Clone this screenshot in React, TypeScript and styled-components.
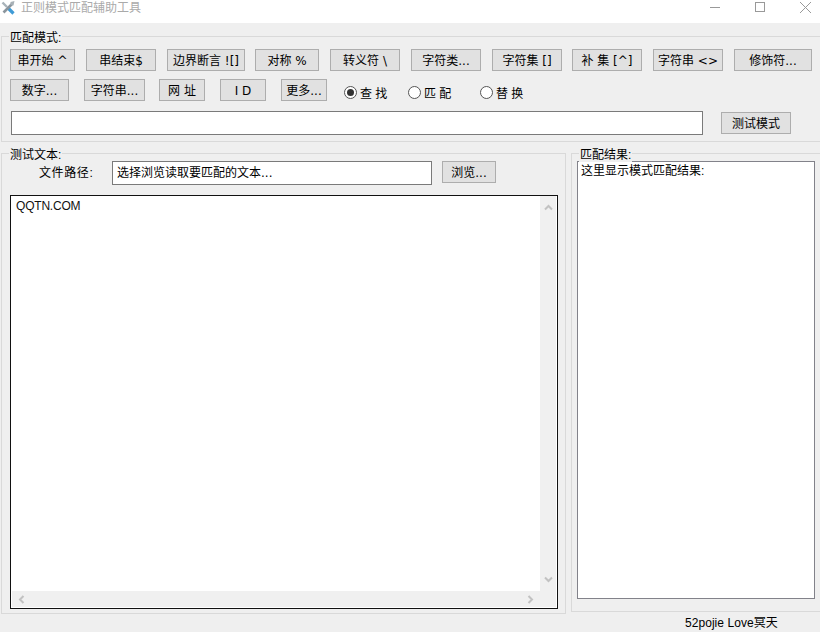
import styled, { createGlobalStyle } from "styled-components";

const GlobalStyle = createGlobalStyle`
  html, body {
    margin: 0;
    padding: 0;
    background: #efefef;
  }
  body {
    font-family: "Liberation Sans", "Noto Sans CJK SC", sans-serif;
    font-size: 12px;
    color: #000;
  }
`;

const Window = styled.div`
  width: 820px;
  height: 632px;
  display: flex;
  flex-direction: column;
  overflow: hidden;
  background: #efefef;
`;

const TitleBar = styled.div`
  height: 23px;
  flex: none;
  display: flex;
  align-items: flex-start;
  background: #fff;
`;

const AppIcon = styled.svg`
  width: 16px;
  height: 16px;
  flex: none;
`;

const Title = styled.span`
  margin: 1px 0 0 5px;
  line-height: 14px;
  color: #aaa;
`;

const WindowControls = styled.div`
  margin-left: auto;
  display: flex;
  padding: 1px 8px 0 0;
  gap: 32px;
`;

const ControlIcon = styled.svg`
  width: 13px;
  height: 13px;
  display: block;
`;

const GroupBox = styled.section<{ $w?: number; $h: number }>`
  position: relative;
  box-sizing: border-box;
  width: ${({ $w }) => ($w ? `${$w}px` : "auto")};
  height: ${({ $h }) => $h}px;
  border: 1px solid #d9d9d9;
  flex: none;
`;

const Legend = styled.div<{ $left: number }>`
  position: absolute;
  top: -6px;
  left: ${({ $left }) => $left}px;
  padding: 0 1px;
  line-height: 14px;
  background: #efefef;
  white-space: nowrap;
`;

const PatternGroup = styled(GroupBox)`
  margin: 13px -4px 0 1px;
  padding: 12px 0 0 8px;
`;

const ButtonRow = styled.div<{ $mt?: number }>`
  display: flex;
  align-items: flex-start;
  margin-top: ${({ $mt }) => $mt ?? 0}px;
`;

const Button = styled.button<{ $w: number; $mr?: number }>`
  box-sizing: border-box;
  width: ${({ $w }) => $w}px;
  height: 22px;
  margin: 0 ${({ $mr }) => $mr ?? 0}px 0 0;
  padding: 1px 0 0;
  flex: none;
  border: 1px solid #adadad;
  background: #e1e1e1;
  color: #000;
  font-family: "DejaVu Sans", "Noto Sans CJK SC", sans-serif;
  font-size: 12px;
  line-height: 18px;
  white-space: pre;
`;

const RadioGroup = styled.div`
  display: flex;
  align-items: center;
  height: 22px;
  margin-left: 17px;
`;

const RadioItem = styled.label<{ $w: number }>`
  display: flex;
  align-items: center;
  width: ${({ $w }) => $w}px;
  padding-top: 8px;
  box-sizing: border-box;
`;

const RadioDot = styled.span<{ $on?: boolean }>`
  box-sizing: border-box;
  width: 13px;
  height: 13px;
  margin: -3px 3px 0 0;
  flex: none;
  border: 1px solid #555;
  border-radius: 50%;
  background: #fff;
  display: flex;
  align-items: center;
  justify-content: center;
  &::after {
    content: "";
    width: 7px;
    height: 7px;
    border-radius: 50%;
    background: ${({ $on }) => ($on ? "#333" : "transparent")};
  }
`;

const RadioText = styled.span`
  white-space: pre;
  line-height: 14px;
`;

const PatternRow = styled.div`
  display: flex;
  align-items: flex-start;
  margin: 10px 0 0 1px;
`;

const TextField = styled.div<{ $w: number; $h: number }>`
  box-sizing: border-box;
  width: ${({ $w }) => $w}px;
  height: ${({ $h }) => $h}px;
  flex: none;
  border: 1px solid #7a7a7a;
  background: #fff;
  padding: 4px 0 0 4px;
  font-family: "DejaVu Sans", "Noto Sans CJK SC", sans-serif;
  line-height: 14px;
  white-space: pre;
`;

const TestButton = styled(Button)`
  margin: 1px 0 0 18px;
`;

const Panels = styled.div`
  display: flex;
  align-items: flex-start;
  margin: 11px 0 0 1px;
`;

const FileRow = styled.div`
  display: flex;
  align-items: flex-start;
  margin: 7px 0 0 0;
`;

const FileLabel = styled.span`
  width: 102px;
  flex: none;
  box-sizing: border-box;
  padding: 5px 0 0 29px;
  line-height: 14px;
  letter-spacing: 0.6px;
`;

const BrowseButton = styled(Button)`
  margin-left: 10px;
`;

const SourceGroup = styled(GroupBox)`
  margin-right: 5px;
  padding-left: 8px;
`;

const SourceBox = styled.div`
  box-sizing: border-box;
  width: 548px;
  height: 414px;
  margin-top: 10px;
  border: 1px solid #111;
  background: #fff;
  padding: 0 1px 1px 1px;
  display: grid;
  grid-template-columns: 1fr 16px;
  grid-template-rows: 1fr 16px;
`;

const SourceText = styled.div`
  padding: 3px 0 0 4px;
  line-height: 14px;
  letter-spacing: -0.2px;
  color: #111;
`;

const VerticalBar = styled.div`
  background: #f0f0f0;
  display: flex;
  flex-direction: column;
  justify-content: space-between;
  align-items: center;
  padding: 7px 0;
`;

const HorizontalBar = styled.div`
  background: #f0f0f0;
  display: flex;
  justify-content: space-between;
  align-items: center;
  padding: 0 5px;
`;

const BarCorner = styled.div`
  background: #f0f0f0;
`;

const Chevron = styled.svg`
  width: 9px;
  height: 9px;
  display: block;
`;

const ResultGroup = styled(GroupBox)`
  padding: 7px 0 0 5px;
`;

const ResultBox = styled.div`
  box-sizing: border-box;
  width: 238px;
  height: 438px;
  border: 1px solid #82828a;
  background: #fff;
  padding: 2px 0 0 3px;
  line-height: 14px;
`;

const StatusBar = styled.div`
  display: flex;
  padding: 1px 0 0 685px;
  line-height: 16px;
  letter-spacing: 0.05px;
`;

function ChevronIcon({ points }: { points: string }) {
  return (
    <Chevron viewBox="0 0 9 9">
      <polyline points={points} fill="none" stroke="#c2c2c2" strokeWidth="2" />
    </Chevron>
  );
}

export default function App() {
  return (
    <Window>
      <GlobalStyle />
      <TitleBar>
        <AppIcon viewBox="0 0 16 16">
          <path d="M2.5 2.5 L7 7" stroke="#a9b3ba" strokeWidth="2.4" />
          <path d="M8 8 L13.5 13.5" stroke="#3f9bd6" strokeWidth="3.2" />
          <path d="M12 4 L3.5 12.5" stroke="#8b959d" strokeWidth="2.6" />
          <path d="M14.5 1 L10.5 2 L10.5 5 L13.5 5.5 Z" fill="#a7b0b6" />
        </AppIcon>
        <Title>正则模式匹配辅助工具</Title>
        <WindowControls>
          <ControlIcon viewBox="0 0 13 13">
            <path d="M1 6.5H11" stroke="#999" />
          </ControlIcon>
          <ControlIcon viewBox="0 0 13 13">
            <rect x="1.5" y="1.5" width="9" height="9" fill="none" stroke="#999" />
          </ControlIcon>
          <ControlIcon viewBox="0 0 13 13">
            <path d="M1 1L12 12M12 1L1 12" stroke="#999" />
          </ControlIcon>
        </WindowControls>
      </TitleBar>

      <PatternGroup $h={106}>
        <Legend $left={7}>匹配模式:</Legend>
        <ButtonRow>
          <Button $w={65} $mr={11}>串开始 ^</Button>
          <Button $w={70} $mr={11}>串结束$</Button>
          <Button $w={78} $mr={10}>边界断言 ![]</Button>
          <Button $w={64} $mr={11}>对称 %</Button>
          <Button $w={70} $mr={11}>转义符 \</Button>
          <Button $w={70} $mr={11}>字符类...</Button>
          <Button $w={70} $mr={10}>字符集 []</Button>
          <Button $w={70} $mr={11}>补 集 [^]</Button>
          <Button $w={70} $mr={11}>字符串 &lt;&gt;</Button>
          <Button $w={78}>修饰符...</Button>
        </ButtonRow>
        <ButtonRow $mt={8}>
          <Button $w={59} $mr={15}>数字...</Button>
          <Button $w={61} $mr={14}>字符串...</Button>
          <Button $w={46} $mr={15}>网 址</Button>
          <Button $w={46} $mr={15}>I D</Button>
          <Button $w={46}>更多...</Button>
          <RadioGroup>
            <RadioItem $w={64}>
              <RadioDot $on />
              <RadioText>查 找</RadioText>
            </RadioItem>
            <RadioItem $w={72}>
              <RadioDot />
              <RadioText>匹 配</RadioText>
            </RadioItem>
            <RadioItem $w={64}>
              <RadioDot />
              <RadioText>替 换</RadioText>
            </RadioItem>
          </RadioGroup>
        </ButtonRow>
        <PatternRow>
          <TextField $w={692} $h={24} />
          <TestButton $w={70}>测试模式</TestButton>
        </PatternRow>
      </PatternGroup>

      <Panels>
        <SourceGroup $w={565} $h={461}>
          <Legend $left={7}>测试文本:</Legend>
          <FileRow>
            <FileLabel>文件路径:</FileLabel>
            <TextField $w={320} $h={24}>选择浏览读取要匹配的文本...</TextField>
            <BrowseButton $w={54}>浏览...</BrowseButton>
          </FileRow>
          <SourceBox>
            <SourceText>QQTN.COM</SourceText>
            <VerticalBar>
              <ChevronIcon points="1,6.5 4.5,3 8,6.5" />
              <ChevronIcon points="1,2.5 4.5,6 8,2.5" />
            </VerticalBar>
            <HorizontalBar>
              <ChevronIcon points="6.5,1 3,4.5 6.5,8" />
              <ChevronIcon points="2.5,1 6,4.5 2.5,8" />
            </HorizontalBar>
            <BarCorner />
          </SourceBox>
        </SourceGroup>
        <ResultGroup $w={252} $h={459}>
          <Legend $left={7}>匹配结果:</Legend>
          <ResultBox>这里显示模式匹配结果:</ResultBox>
        </ResultGroup>
      </Panels>

      <StatusBar>52pojie Love冥天</StatusBar>
    </Window>
  );
}
